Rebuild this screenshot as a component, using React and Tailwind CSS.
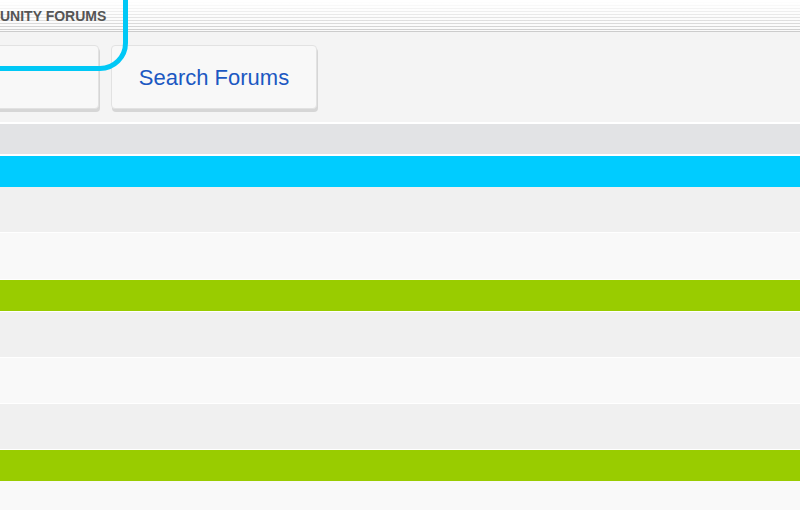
const rows = [
  { kind: "row", tone: "bg-[#f0f0f0]", h: "h-[46px]" },
  { kind: "row", tone: "bg-[#f9f9f9]", h: "h-[47px]" },
  { kind: "cat", h: "h-[32px] border-b border-white" },
  { kind: "row", tone: "bg-[#f0f0f0]", h: "h-[46px]" },
  { kind: "row", tone: "bg-[#f9f9f9]", h: "h-[46px]" },
  { kind: "row", tone: "bg-[#f0f0f0]", h: "h-[46px]" },
  { kind: "cat", h: "h-[31px]" },
  { kind: "row", tone: "bg-[#f9f9f9]", h: "h-[46px]" },
];

function Button({ children, className = "" }) {
  return (
    <button
      className={`h-[64px] shrink-0 rounded-[4px] border border-[#e2e2e2] bg-[#f8f8f8] text-[22px] text-[#1c58c2] shadow-[1px_3px_0_#d6d6d6] ${className}`}
    >
      {children}
    </button>
  );
}

export default function App() {
  return (
    <div className="relative h-[510px] w-[800px] overflow-hidden bg-white font-['Liberation_Sans',Arial,sans-serif]">
      {/* striped header */}
      <div className="flex h-[32px] items-center border-b border-[#cccccc] bg-[linear-gradient(to_bottom,rgba(255,255,255,1)_5%,rgba(255,255,255,0)_100%),repeating-linear-gradient(to_bottom,#fafafa_0,#fafafa_2px,#cdcdcd_2px,#cdcdcd_3px)]">
        <span className="pt-[1px] text-[14px] font-bold text-[#555555]">UNITY FORUMS</span>
      </div>

      {/* active tab outline */}
      <div className="pointer-events-none absolute left-[-200px] top-[-60px] h-[131px] w-[328px] rounded-[28px] border-[5px] border-[#00c8f6]" />

      {/* search buttons */}
      <div className="flex gap-3 bg-[#f4f4f4] pb-[13px] pt-[13px]">
        <Button className="ml-[-61px] w-[160px]" />
        <Button className="w-[206px]">Search Forums</Button>
      </div>

      <div className="h-[2px] bg-white" />
      <div className="h-[30px] bg-[#e2e3e5]" />
      <div className="h-[2px] bg-white" />
      <div className="h-[31px] bg-[#00ccff]" />

      {rows.map((r, i) =>
        r.kind === "cat" ? (
          <div key={i} className={`${r.h} bg-[#99cc00]`} />
        ) : (
          <div key={i} className={`${r.h} border-b border-white ${r.tone}`} />
        )
      )}
    </div>
  );
}
